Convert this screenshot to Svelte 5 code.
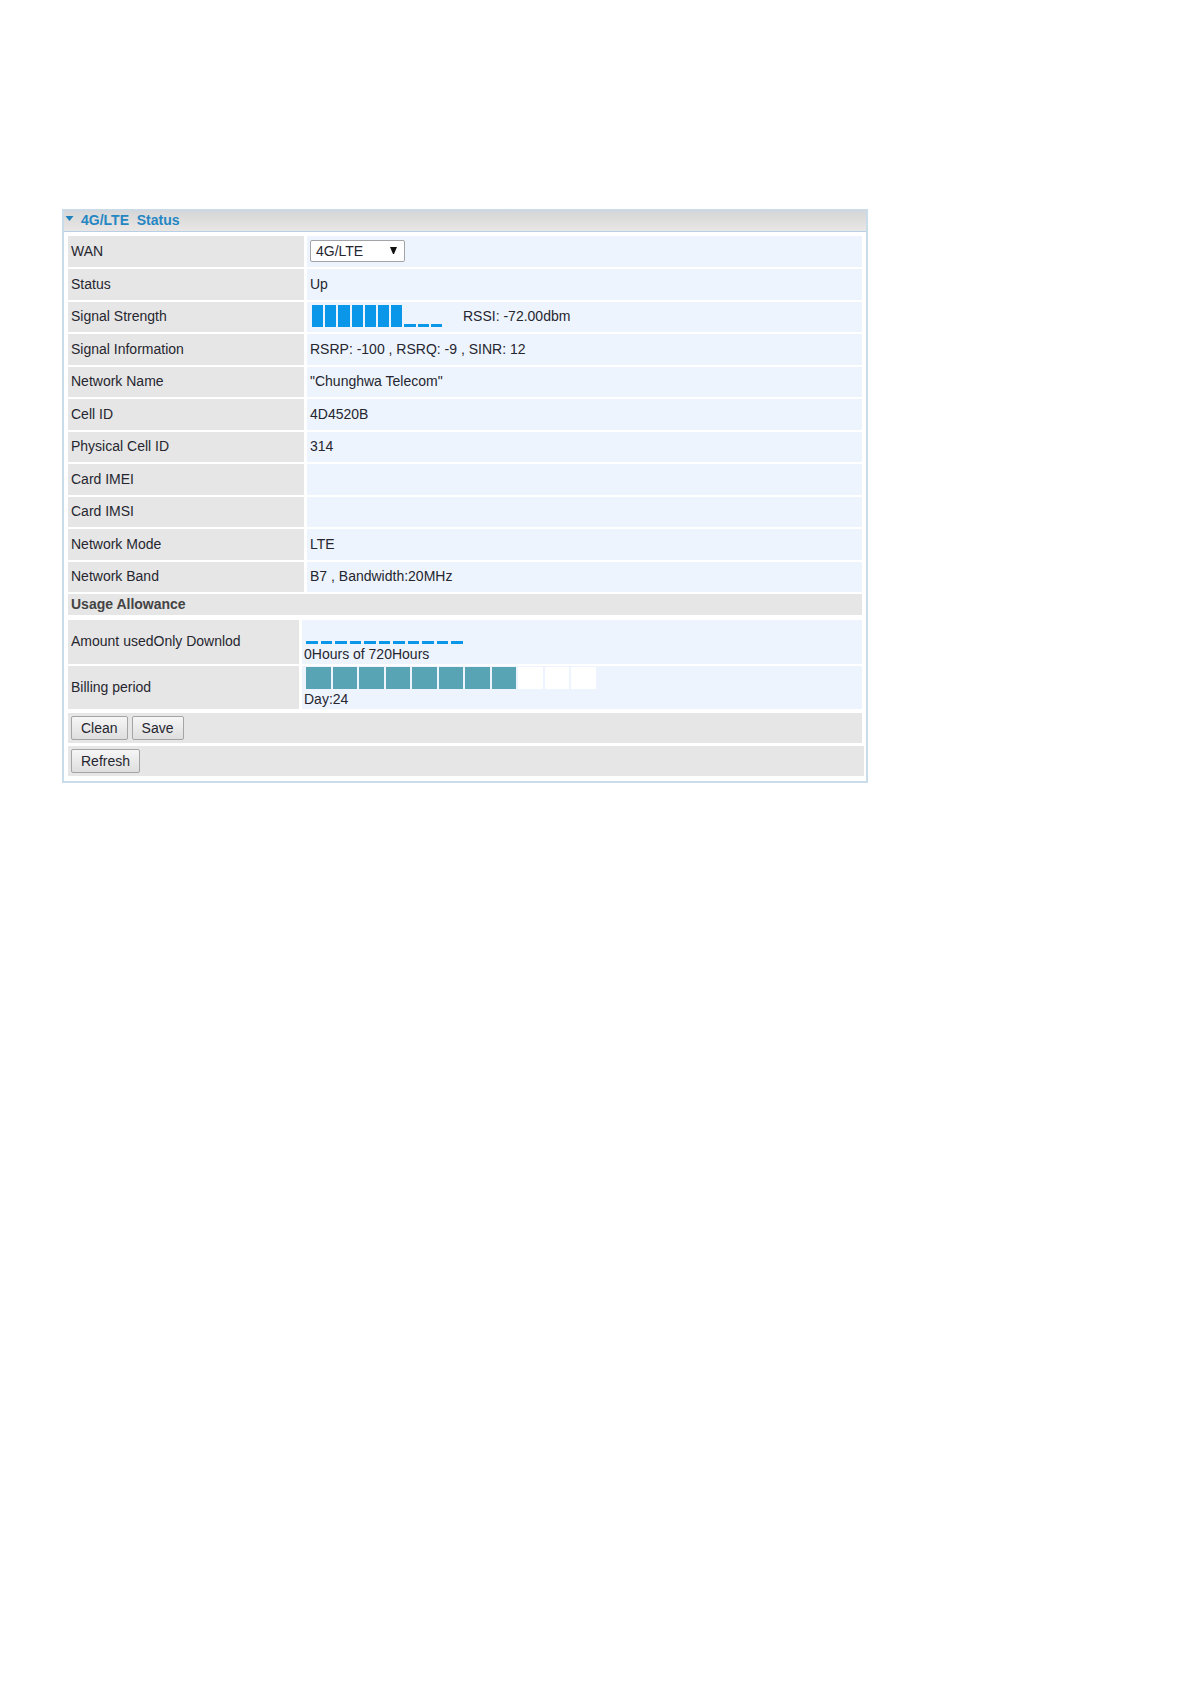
<script>
  let wan = $state('4G/LTE');
  let open = $state(true);

  const signalBars = Array.from({ length: 10 }, (_, i) => i < 7);
  const usageBars = Array.from({ length: 11 }, () => false);
  const billingBars = Array.from({ length: 11 }, (_, i) => i < 8);

  const details = [
    ['Signal Information', 'RSRP: -100 , RSRQ: -9 , SINR: 12'],
    ['Network Name', '"Chunghwa Telecom"'],
    ['Cell ID', '4D4520B'],
    ['Physical Cell ID', '314'],
    ['Card IMEI', ''],
    ['Card IMSI', ''],
    ['Network Mode', 'LTE'],
    ['Network Band', 'B7 , Bandwidth:20MHz']
  ];
</script>

<main>
  <section class="panel">
    <h1>
      <button class="toggle" aria-expanded={open} onclick={() => (open = !open)}>
        <svg class="caret" viewBox="0 0 8 5" aria-hidden="true"><path d="M0 0h8L4 5z" /></svg>
        4G/LTE&nbsp;&nbsp;Status
      </button>
    </h1>

    {#if open}
      <div class="body">
        <table class="status">
          <tbody>
            <tr>
              <th scope="row"><label for="wan">WAN</label></th>
              <td>
                <span class="picker">
                  <select id="wan" bind:value={wan}>
                    <option>4G/LTE</option>
                  </select>
                  <svg class="arrow" viewBox="0 0 7 7" aria-hidden="true"><path d="M0 0h7L4 7H3z" /></svg>
                </span>
              </td>
            </tr>
            <tr>
              <th scope="row">Status</th>
              <td>Up</td>
            </tr>
            <tr>
              <th scope="row">Signal Strength</th>
              <td>
                <div class="signal">
                  <div class="meter strength">
                    {#each signalBars as full}<i class:full></i>{/each}
                  </div>
                  <span>RSSI: -72.00dbm</span>
                </div>
              </td>
            </tr>
            {#each details as [name, value]}
              <tr>
                <th scope="row">{name}</th>
                <td>{value}</td>
              </tr>
            {/each}
          </tbody>
        </table>

        <h2>Usage Allowance</h2>

        <table class="usage">
          <tbody>
            <tr>
              <th scope="row">Amount usedOnly Downlod</th>
              <td>
                <div class="meter hours">
                  {#each usageBars as full}<i class:full></i>{/each}
                </div>
                <div class="caption">0Hours of 720Hours</div>
              </td>
            </tr>
            <tr>
              <th scope="row">Billing period</th>
              <td>
                <div class="meter days">
                  {#each billingBars as full}<i class:full></i>{/each}
                </div>
                <div class="caption">Day:24</div>
              </td>
            </tr>
          </tbody>
        </table>

        <div class="actions">
          <button class="btn">Clean</button>
          <button class="btn">Save</button>
        </div>
        <div class="actions last">
          <button class="btn">Refresh</button>
        </div>
      </div>
    {/if}
  </section>
</main>

<style>
  :global(body) {
    background: #fff;
  }

  main {
    padding: 209px 62px 60px;
    font: 14px/16px 'Liberation Sans', Arial, sans-serif;
    color: #262630;
  }

  .panel {
    box-sizing: border-box;
    max-width: 806px;
    border: 2px solid #c9dcea;
    border-top-width: 1px;
  }

  h1 {
    margin: 0;
    font-size: 14px;
    line-height: 16px;
    border-bottom: 1px solid #b9cfe6;
    background: linear-gradient(#d0d6de, #d9d9d9 20%, #e9e7e6);
  }

  .toggle {
    display: flex;
    width: 100%;
    gap: 7px;
    padding: 2px 1px 3px;
    border: 0;
    background: none;
    font: inherit;
    color: #2686c4;
    text-align: left;
  }

  .caret {
    width: 9px;
    height: 5px;
    margin-top: 4px;
    fill: #1c80bd;
  }

  .body {
    padding: 4px 2px 5px 4px;
  }

  table {
    border-collapse: collapse;
    table-layout: fixed;
  }

  th,
  td {
    padding: 0 3px 2px;
    font-weight: normal;
    text-align: left;
    vertical-align: middle;
    background-clip: padding-box;
    border-bottom: 2px solid #fff;
  }

  th {
    background-color: #e6e6e6;
    border-right: 3px solid #fff;
  }

  td {
    background-color: #edf4fd;
  }

  .status,
  .usage,
  h2,
  .actions {
    box-sizing: border-box;
    width: calc(100% - 2px);
  }

  .status th {
    width: 230px;
  }

  .status tr {
    height: 32px;
  }

  .status tr:nth-child(even) {
    height: 33px;
  }

  .picker {
    display: inline-grid;
    align-items: center;
    vertical-align: middle;
  }

  .picker > * {
    grid-area: 1 / 1;
  }

  select {
    appearance: none;
    box-sizing: border-box;
    width: 95px;
    height: 22px;
    padding: 0 20px 0 5px;
    border: 1px solid #a2a4a8;
    border-radius: 2px;
    background: #fff;
    font: inherit;
    color: inherit;
  }

  .arrow {
    justify-self: end;
    width: 7px;
    height: 7px;
    margin-right: 8px;
    fill: #111;
    pointer-events: none;
  }

  .signal {
    display: flex;
    align-items: center;
    gap: 21px;
    padding-left: 2px;
  }

  .meter {
    display: flex;
    align-items: flex-end;
    gap: 2px;
    height: 22px;
  }

  .meter i {
    flex: 1;
    height: 3px;
    background: #0a97ea;
  }

  .meter .full {
    height: 22px;
  }

  .strength {
    width: 130px;
  }

  h2 {
    margin: 0;
    padding: 2px 3px 3px;
    background: #e6e6e6;
    font-size: 14px;
    line-height: 16px;
    color: #444;
  }

  .usage {
    margin-top: 5px;
  }

  .usage th {
    width: 225px;
  }

  .usage td {
    padding: 1px 2px 0;
  }

  .usage tr {
    height: 45px;
  }

  .hours,
  .days {
    margin-left: 2px;
  }

  .hours {
    width: 157px;
    gap: 3px;
  }

  .days {
    width: 290px;
  }

  .days i {
    height: 22px;
    background: #fff;
  }

  .days .full {
    background: #58a4b4;
  }

  .caption {
    padding: 2px 0;
  }

  .actions {
    display: flex;
    gap: 4px;
    margin-top: 2px;
    padding: 3px;
    background: #e6e6e6;
  }

  .last {
    width: 100%;
    margin-top: 3px;
  }

  .btn {
    height: 24px;
    padding: 0 9px 1px;
    border: 1px solid #a4a4a4;
    border-radius: 2px;
    background: linear-gradient(#f6f6f6, #dedede);
    font: inherit;
    color: inherit;
  }
</style>
